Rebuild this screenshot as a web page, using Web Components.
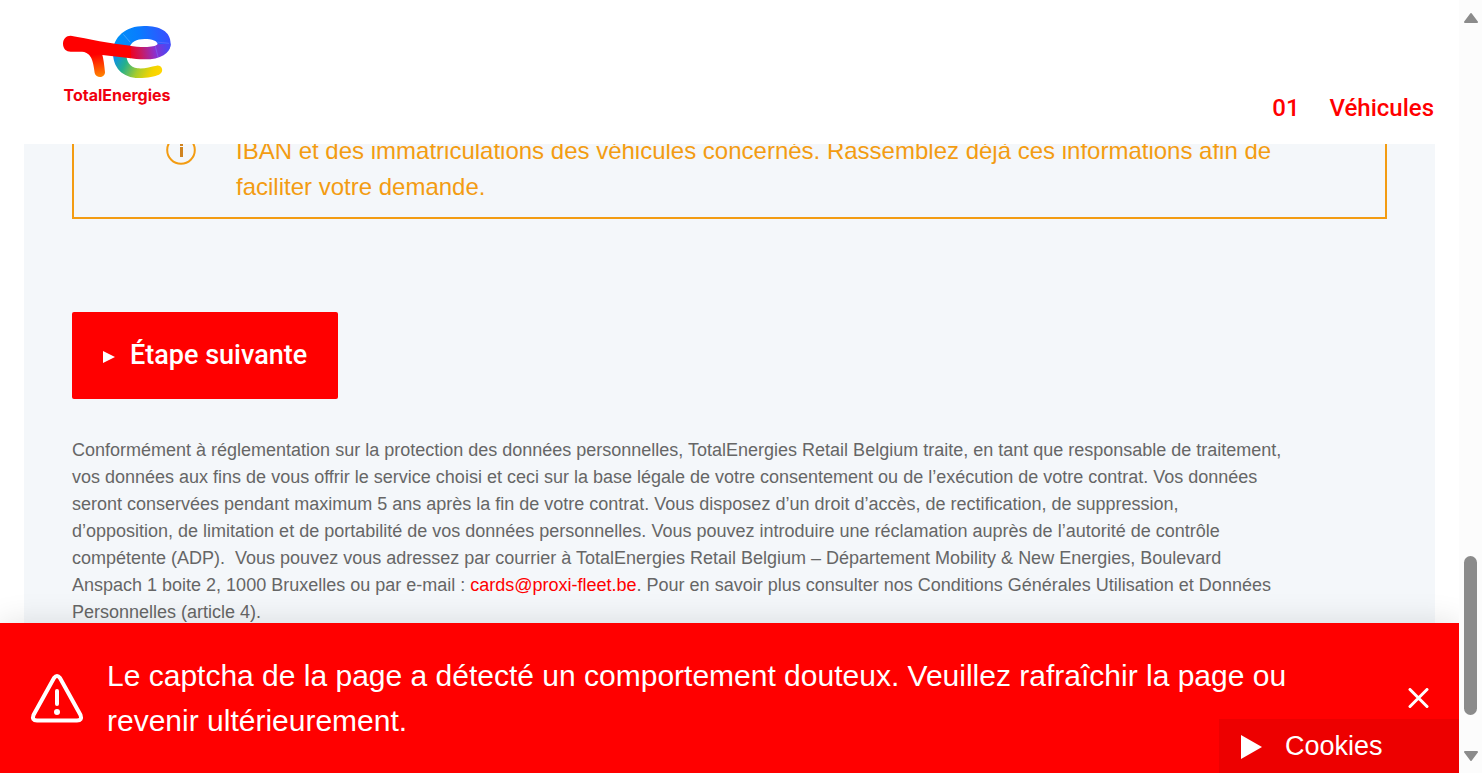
<!DOCTYPE html>
<html lang="fr">
<head>
<meta charset="utf-8">
<title>TotalEnergies – Véhicules</title>
<style>
  body { margin: 0; font-family: "Liberation Sans", Arial, sans-serif; background: #fff; }
</style>
</head>
<body>
<fleet-app>
  <site-header slot="header"></site-header>
  <form-step slot="main">
    <info-notice>IBAN et des immatriculations des véhicules concernés. Rassemblez déjà ces informations afin de faciliter votre demande.</info-notice>
    <next-button>Étape suivante</next-button>
    <legal-text></legal-text>
  </form-step>
  <alert-banner slot="footer">Le captcha de la page a détecté un comportement douteux. Veuillez rafraîchir la page ou revenir ultérieurement.</alert-banner>
  <cookie-tab slot="overlay">Cookies</cookie-tab>
  <scroll-rail slot="rail"></scroll-rail>
</fleet-app>

<script>
const define = (name, html) => {
  const template = document.createElement('template');
  template.innerHTML = html;
  customElements.define(name, class extends HTMLElement {
    constructor() {
      super();
      this.attachShadow({ mode: 'open' }).append(template.content.cloneNode(true));
    }
  });
};

define('fleet-app', `
<style>
  :host { display: flex; height: 100vh; overflow: hidden; }
  .view { position: relative; flex: 1; min-width: 0; display: flex; flex-direction: column; }
  main { flex: 1; min-height: 0; overflow: hidden; }
</style>
<div class="view">
  <slot name="header"></slot>
  <main><slot name="main"></slot></main>
  <slot name="footer"></slot>
  <slot name="overlay"></slot>
</div>
<slot name="rail"></slot>`);

define('brand-logo', `
<style>
  :host { display: block; }
  a { display: flex; flex-direction: column; align-items: center; gap: 6px; width: 110px; color: #f0000f; text-decoration: none;
      font: 700 16px/20px Inter, sans-serif; }
  svg { display: block; width: 110px; height: 54px; }
</style>
<a href="#">
  <svg viewBox="36 30 330 162" aria-hidden="true">
    <defs>
      <linearGradient id="leg" gradientUnits="userSpaceOnUse" x1="140" y1="118" x2="152" y2="188"><stop offset="0" stop-color="#f00"/><stop offset="1" stop-color="#ff8a00"/></linearGradient>
      <linearGradient id="low" gradientUnits="userSpaceOnUse" x1="196" y1="115" x2="325" y2="180"><stop offset="0" stop-color="#0d8df0"/><stop offset=".28" stop-color="#25b08c"/><stop offset=".58" stop-color="#a8cc2c"/><stop offset=".85" stop-color="#f3d400"/><stop offset="1" stop-color="#ffd600"/></linearGradient>
      <linearGradient id="top" gradientUnits="userSpaceOnUse" x1="195" y1="90" x2="362" y2="70"><stop offset="0" stop-color="#0092f5"/><stop offset=".45" stop-color="#087cff"/><stop offset="1" stop-color="#3b4cff"/></linearGradient>
      <linearGradient id="mix" gradientUnits="userSpaceOnUse" x1="238" y1="112" x2="352" y2="92"><stop offset="0" stop-color="#f1001c"/><stop offset=".3" stop-color="#c81a62"/><stop offset=".65" stop-color="#8f30cb"/><stop offset="1" stop-color="#4948f5"/></linearGradient>
    </defs>
    <path fill="url(#low)" d="M189 108C187 158 218 189 266 189C294 189 315 184 327 179C343 172 338 150 320 152C300 155 285 162 263 160C239 158 229 138 229 118Z"/>
    <path fill="url(#top)" d="M189 110C190 66 227 33 282 33C330 33 362 49 362 86C362 93 360 99 357 104L323 91C325 77 305 72 284 72C259 72 243 81 237 100L230 122Z"/>
    <path fill="url(#mix)" d="M238 92C267 97 315 99 322 88L362 86C361 116 332 133 284 133C266 133 250 131 238 129Z"/>
    <path fill="#f00" d="M62 62C48 62 39 72 39 86C39 101 49 110 62 110L96 110C115 112 121 122 124 126L157 120L242 130L242 92C180 86 115 71 62 62Z"/>
    <path fill="url(#leg)" d="M108 112C127 121 131 151 134 174C138 191 165 190 165 172C163 149 160 130 157 119Z"/>
    <path fill="none" stroke="#7cbcff" stroke-width="1.5" d="M220 58L241 82"/><path fill="none" stroke="#7878ff" stroke-width="1.5" d="M319 81L357 85M316 94L324 126"/>
  </svg>
  <span>TotalEnergies</span>
</a>`);

define('site-header', `
<style>
  :host { display: flex; justify-content: space-between; align-items: flex-end; box-sizing: border-box; height: 144px;
          padding: 0 25px 20px 24px; background: #fff; position: relative; z-index: 1; }
  brand-logo { align-self: flex-start; padding: 25px 0 0 38px; }
  nav a { display: flex; gap: 30px; color: #f00; text-decoration: none; font: 500 24px/32px Roboto, sans-serif; }
</style>
<brand-logo></brand-logo>
<nav><a href="#"><span>01</span><span>Véhicules</span></a></nav>`);

define('form-step', `
<style>
  :host { display: flex; flex-direction: column; align-items: flex-start; margin: -24px 24px 0; padding: 0 48px 48px; background: #f4f7fa; }
</style>
<slot></slot>`);

define('info-notice', `
<style>
  :host { display: flex; align-items: flex-start; gap: 40px; align-self: stretch; margin-bottom: 93px; padding: 11px 92px 12px;
          border: 2px solid #f39c12; color: #f39c12; font-size: 24px; line-height: 36px; }
  svg { flex: none; width: 30px; height: 36px; }
  p { margin: 0; }
</style>
<svg viewBox="0 0 30 36" aria-hidden="true">
  <circle cx="15" cy="17" r="13.800" fill="none" stroke="#f39c12" stroke-width="2"/>
  <path fill="#d08420" d="M14 10h3v3h-3zM14 14h3v10h-3z"/>
</svg>
<p><slot></slot></p>`);

define('next-button', `
<style>
  :host { display: block; margin-bottom: 38px; }
  button { display: flex; align-items: center; gap: 15px; height: 87px; padding: 0 31px 2px; border: 0; border-radius: 2px;
           background: #f00; color: #fff; font: 500 27px/36px Roboto, sans-serif; }
  svg { width: 12px; height: 16px; }
</style>
<button type="button">
  <svg viewBox="0 0 12 16" aria-hidden="true"><path fill="#fff" d="M0 4L12 10L0 16Z"/></svg>
  <span><slot></slot></span>
</button>`);

define('legal-text', `
<style>
  :host { display: block; max-width: 1211px; color: #666; font-size: 18px; line-height: 27px; }
  p { margin: 0; }
  a { color: #f00; text-decoration: none; }
</style>
<p>Conformément à réglementation sur la protection des données personnelles, TotalEnergies Retail Belgium traite, en tant que responsable de traitement, vos données aux fins de vous offrir le service choisi et ceci sur la base légale de votre consentement ou de l’exécution de votre contrat. Vos données seront conservées pendant maximum 5 ans après la fin de votre contrat. Vous disposez d’un droit d’accès, de rectification, de suppression, d’opposition, de limitation et de portabilité de vos données personnelles. Vous pouvez introduire une réclamation auprès de l’autorité de contrôle compétente (ADP).&nbsp; Vous pouvez vous adressez par courrier à TotalEnergies Retail Belgium – Département Mobility &amp; New Energies, Boulevard Anspach 1 boite 2, 1000 Bruxelles ou par e-mail : <a href="mailto:cards@proxi-fleet.be">cards@proxi-fleet.be</a>. Pour en savoir plus consulter nos Conditions Générales Utilisation et Données Personnelles (article 4).</p>`);

define('alert-banner', `
<style>
  :host { display: flex; align-items: center; gap: 23px; padding: 30px; background: #f00; color: #fff;
          font-size: 30px; line-height: 45px; box-shadow: 0 0 30px rgba(0,0,0,.12); position: relative; z-index: 1; }
  svg { display: block; flex: none; }
  p { margin: 0; flex: 1; max-width: 1200px; }
  button { margin-left: auto; padding: 0; border: 0; background: none; }
</style>
<svg width="54" height="50" viewBox="0 0 54 50" aria-hidden="true" fill="none" stroke="#fff" stroke-linecap="round" stroke-linejoin="round">
  <path stroke-width="4" d="M24 5Q27 1 30 5L50.500 42Q52.500 47.500 47 47.500H7Q1.500 47.500 3.500 42Z"/>
  <path stroke-width="4" d="M27 18V31"/><circle cx="27" cy="39" r="3" fill="#fff" stroke="none"/>
</svg>
<p role="alert"><slot></slot></p>
<button type="button" aria-label="Fermer">
  <svg width="21" height="21" viewBox="0 0 21 21" aria-hidden="true"><path fill="none" stroke="#fff" stroke-width="3" stroke-linecap="round" d="M2 1.500L19 18.500M19 1.500L2 18.500"/></svg>
</button>`);

define('cookie-tab', `
<style>
  :host { display: block; position: absolute; right: 0; bottom: 0; z-index: 2; }
  button { display: flex; align-items: center; gap: 23px; width: 240px; height: 54px; padding: 0 22px; border: 0; background: #ed0000; color: #fff;
           font: 27px/32px "Liberation Sans", Arial, sans-serif; }
  svg { width: 21px; height: 26px; }
</style>
<button type="button">
  <svg viewBox="0 0 21 26" aria-hidden="true"><path fill="#fff" d="M0 2L21 14L0 26Z"/></svg>
  <span><slot></slot></span>
</button>`);

define('scroll-rail', `
<style>
  :host { display: flex; flex-direction: column; align-items: center; flex: none; box-sizing: border-box; width: 23px; padding: 12px 0; background: #fcfcfc;
          position: relative; z-index: 3; }
  svg { width: 14px; height: 11px; fill: #8b8b8b; stroke: #8b8b8b; stroke-width: 2; stroke-linejoin: round; }
  .track { flex: 1; display: flex; flex-direction: column; justify-content: flex-end; padding-bottom: 35px; }
  .thumb { width: 13px; height: 23%; border-radius: 7px; background: #8b8b8b; }
</style>
<svg viewBox="0 0 14 11" aria-hidden="true"><path d="M7 2L13 10H1Z"/></svg>
<div class="track"><div class="thumb"></div></div>
<svg viewBox="0 0 14 11" aria-hidden="true"><path d="M7 10L13 2H1Z"/></svg>`);
</script>
</body>
</html>
